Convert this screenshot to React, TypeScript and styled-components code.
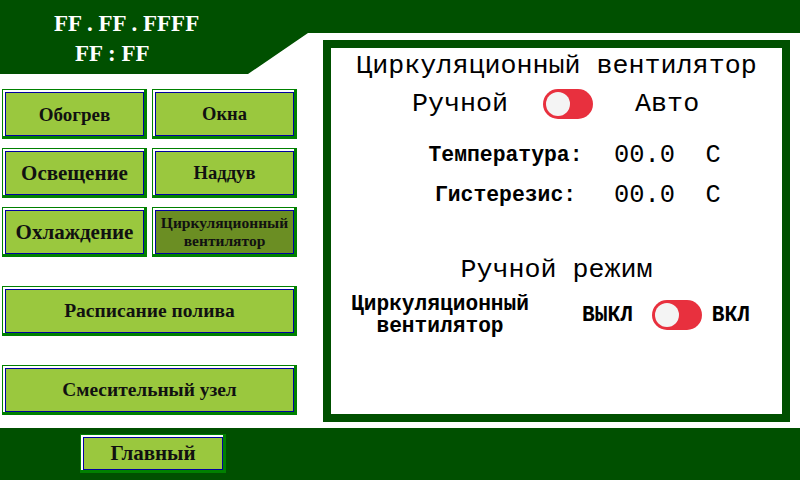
import React from "react";
import styled, { createGlobalStyle } from "styled-components";

const DARK = "#005000";
const FRAME = "#008000";
const LIGHT = "#9ac83e";
const ACTIVE = "#6b8e23";

const GlobalStyle = createGlobalStyle`
  html, body {
    margin: 0;
    padding: 0;
    background: #fff;
  }
  #root {
    width: 800px;
    height: 480px;
    overflow: hidden;
  }
`;

const Page = styled.div`
  width: 800px;
  height: 480px;
  display: grid;
  grid-template-rows: 428px 52px;
  background: #fff;
`;

const Main = styled.div`
  display: flex;
`;

const LeftCol = styled.div`
  width: 310px;
  display: flex;
  flex-direction: column;
`;

const ClockHeader = styled.div`
  height: 74px;
  background: ${DARK};
  clip-path: polygon(0 0, 100% 0, 100% 33px, 308px 33px, 248px 74px, 0 74px);
  display: flex;
  flex-direction: column;
  align-items: flex-start;
  padding: 9px 0 0 54px;
  box-sizing: border-box;
`;

const ClockLine = styled.div<{ $indent?: number }>`
  font-family: "Liberation Serif", serif;
  font-weight: bold;
  font-size: 23px;
  line-height: 30px;
  color: #fff;
  white-space: pre;
  margin-left: ${(p) => p.$indent || 0}px;
`;

const ButtonGrid = styled.div`
  display: grid;
  grid-template-columns: 145px 145px;
  grid-auto-rows: 50px;
  column-gap: 5px;
  row-gap: 9px;
  padding: 15px 0 0 2px;
`;

const WideStack = styled.div`
  display: flex;
  flex-direction: column;
  gap: 29px;
  padding: 29px 0 0 2px;
`;

const Frame = styled.button<{ $w?: number; $h?: number }>`
  box-sizing: border-box;
  width: ${(p) => (p.$w ? `${p.$w}px` : "100%")};
  height: ${(p) => (p.$h ? `${p.$h}px` : "100%")};
  border: 1px solid ${FRAME};
  border-right-width: 3px;
  border-bottom-width: 3px;
  background: #fff;
  padding: 2px 0 0 2px;
  margin: 0;
  display: flex;
  cursor: pointer;
`;

const Face = styled.span<{ $active?: boolean; $size: number; $lh?: number }>`
  flex: 1;
  display: flex;
  align-items: center;
  justify-content: center;
  text-align: center;
  border: 1px solid #0000a0;
  background: ${(p) => (p.$active ? ACTIVE : LIGHT)};
  font-family: "Liberation Serif", serif;
  font-weight: bold;
  font-size: ${(p) => p.$size}px;
  line-height: ${(p) => (p.$lh ? `${p.$lh}px` : "1")};
  color: #111;
`;

const RightCol = styled.div`
  flex: 1;
  display: flex;
  flex-direction: column;
`;

const TopStrip = styled.div`
  height: 33px;
  background: ${DARK};
`;

const Panel = styled.div`
  flex: 1;
  margin: 7px 10px 6px 13px;
  border: 8px solid ${DARK};
  background: #fff;
  display: flex;
  flex-direction: column;
  align-items: center;
  font-family: "Liberation Mono", "Courier New", monospace;
  color: #000;
`;

const Heading = styled.div<{ $mt: number }>`
  font-size: 26.7px;
  line-height: 30px;
  white-space: pre;
  margin-top: ${(p) => p.$mt}px;
`;

const ModeRow = styled.div`
  align-self: stretch;
  display: flex;
  align-items: center;
  height: 30px;
  margin-top: 8px;
  padding-left: 81px;
  font-size: 26.7px;
  line-height: 30px;
`;

const Gap = styled.span<{ $w: number }>`
  display: inline-block;
  width: ${(p) => p.$w}px;
  flex: none;
`;

const Toggle = styled.span`
  flex: none;
  position: relative;
  width: 50px;
  height: 30px;
  border-radius: 15px;
  background: #e8303e;
`;

const Knob = styled.span`
  position: absolute;
  left: 3px;
  top: 3px;
  width: 24px;
  height: 24px;
  border-radius: 50%;
  background: #f4f4f4;
`;

const ParamGrid = styled.div`
  align-self: stretch;
  display: grid;
  grid-template-columns: 171px auto;
  grid-auto-rows: 40px;
  column-gap: 23px;
  align-items: center;
  margin-top: 16px;
  padding-left: 89px;
`;

const ParamLabel = styled.div`
  font-weight: bold;
  font-size: 21.4px;
  text-align: center;
  white-space: pre;
`;

const ParamValue = styled.div`
  font-size: 25.4px;
  white-space: pre;
`;

const ManualRow = styled.div`
  align-self: stretch;
  display: flex;
  align-items: center;
  margin-top: 8px;
  padding-left: 14px;
  font-weight: bold;
  font-size: 21.2px;
  line-height: 22px;
`;

const DeviceName = styled.div`
  width: 190px;
  text-align: center;
  flex: none;
`;

const BottomBar = styled.div`
  background: ${DARK};
  padding: 6px 0 0 80px;
`;

const Switch = () => (
  <Toggle>
    <Knob />
  </Toggle>
);

const menu = [
  { label: "Обогрев", size: 19 },
  { label: "Окна", size: 18.5 },
  { label: "Освещение", size: 21 },
  { label: "Наддув", size: 18.6 },
  { label: "Охлаждение", size: 21 },
  { label: "Циркуляционный вентилятор", size: 15.5, lh: 18, active: true },
];

export default function App() {
  return (
    <>
      <GlobalStyle />
      <Page>
        <Main>
          <LeftCol>
            <ClockHeader>
              <ClockLine>FF . FF . FFFF</ClockLine>
              <ClockLine $indent={21}>FF : FF</ClockLine>
            </ClockHeader>
            <ButtonGrid>
              {menu.map((m) => (
                <Frame key={m.label}>
                  <Face $size={m.size} $lh={m.lh} $active={m.active}>
                    {m.label}
                  </Face>
                </Frame>
              ))}
            </ButtonGrid>
            <WideStack>
              <Frame $w={295} $h={50}>
                <Face $size={19.5}>Расписание полива</Face>
              </Frame>
              <Frame $w={295} $h={50}>
                <Face $size={19.4}>Смесительный узел</Face>
              </Frame>
            </WideStack>
          </LeftCol>
          <RightCol>
            <TopStrip />
            <Panel>
              <Heading $mt={3}>Циркуляционный вентилятор</Heading>
              <ModeRow>
                <span>Ручной</span>
                <Gap $w={35} />
                <Switch />
                <Gap $w={42} />
                <span>Авто</span>
              </ModeRow>
              <ParamGrid>
                <ParamLabel>Температура:</ParamLabel>
                <ParamValue>00.0  C</ParamValue>
                <ParamLabel>Гистерезис:</ParamLabel>
                <ParamValue>00.0  C</ParamValue>
              </ParamGrid>
              <Heading $mt={40}>Ручной режим</Heading>
              <ManualRow>
                <DeviceName>
                  Циркуляционный
                  <br />
                  вентилятор
                </DeviceName>
                <Gap $w={47} />
                <span>ВЫКЛ</span>
                <Gap $w={19} />
                <Switch />
                <Gap $w={10} />
                <span>ВКЛ</span>
              </ManualRow>
            </Panel>
          </RightCol>
        </Main>
        <BottomBar>
          <Frame $w={146} $h={39}>
            <Face $size={21}>Главный</Face>
          </Frame>
        </BottomBar>
      </Page>
    </>
  );
}
